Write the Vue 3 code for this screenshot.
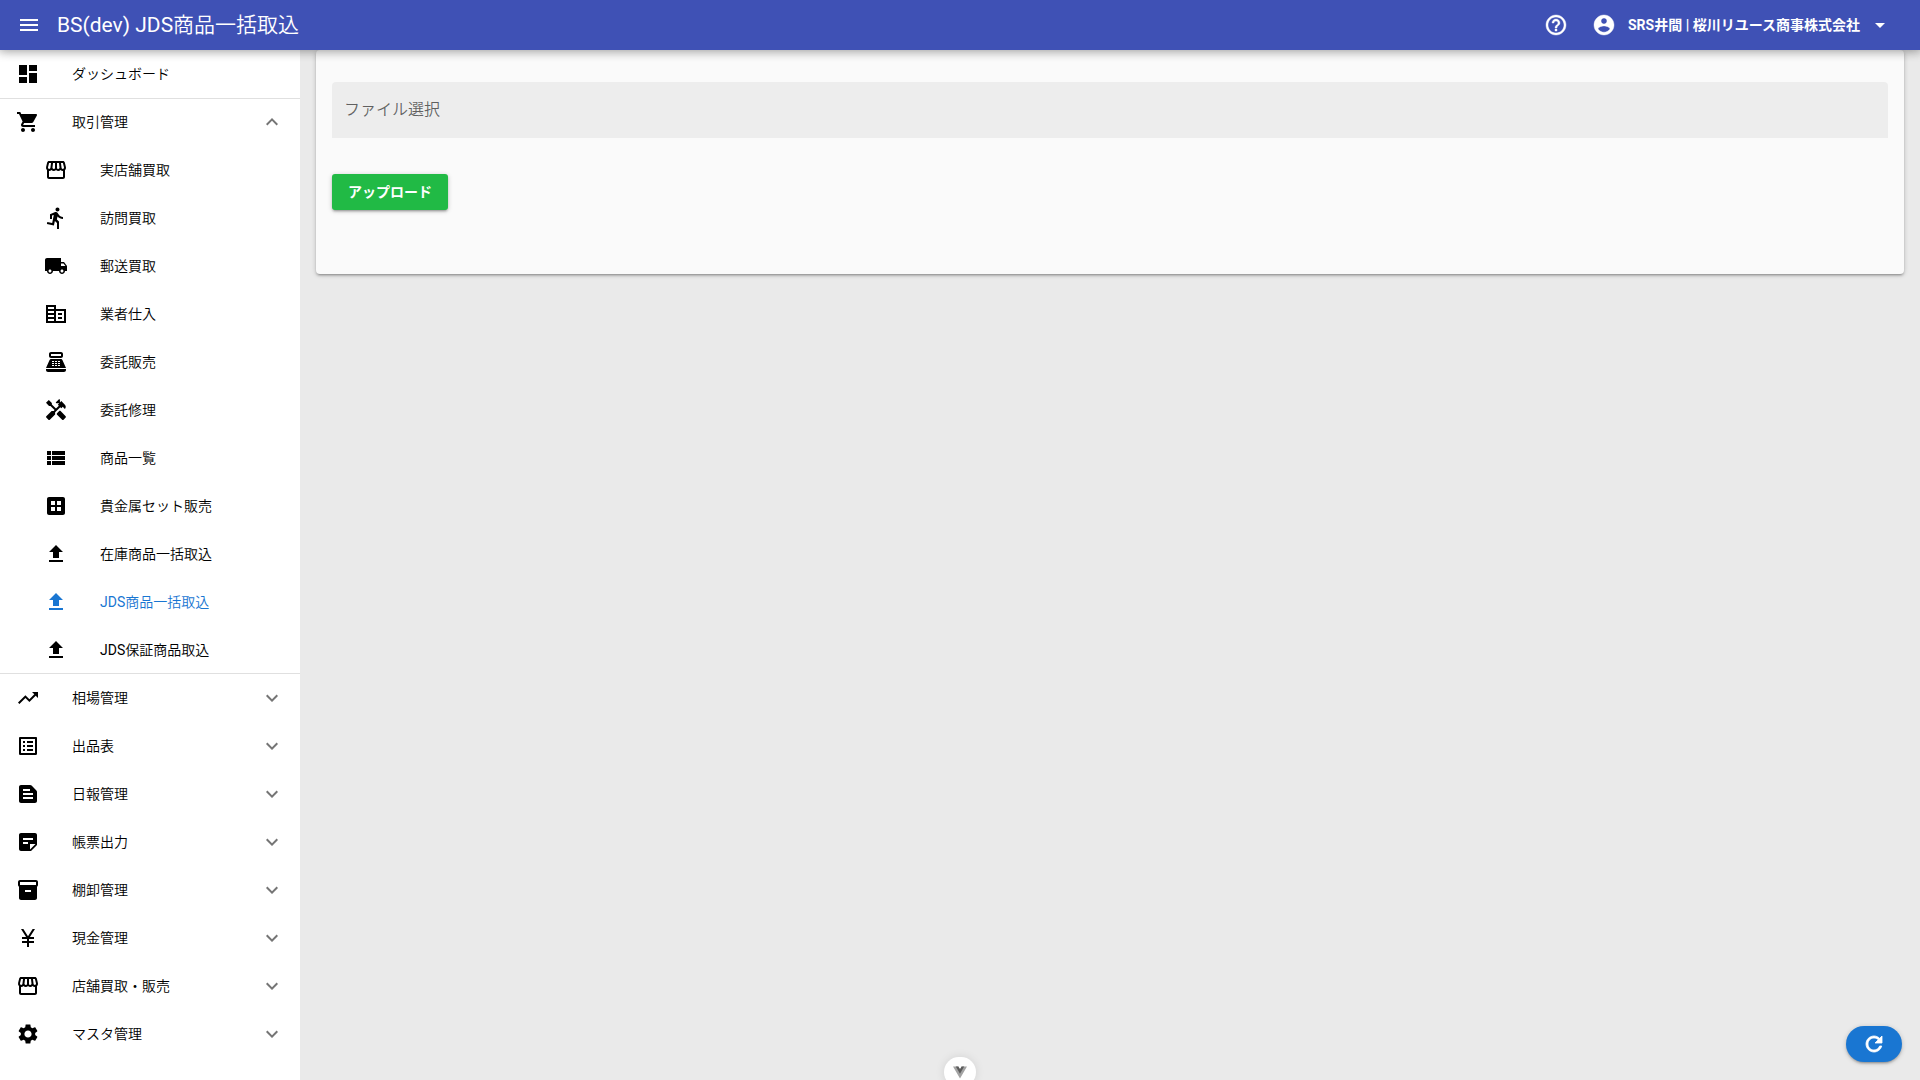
<template>
  <div class="layout">
    <header class="toolbar">
      <button type="button" class="btn-icon" aria-label="メニュー" @click="drawer = !drawer">
        <svg class="icon" viewBox="0 0 24 24"><path :d="icons.menu" /></svg>
      </button>
      <h1 class="toolbar-title">BS(dev) JDS商品一括取込</h1>
      <button type="button" class="btn-icon" aria-label="ヘルプ">
        <svg class="icon icon-medium" viewBox="0 0 24 24"><path :d="icons.help" /></svg>
      </button>
      <button type="button" class="btn-user">
        <svg class="icon icon-medium" viewBox="0 0 24 24"><path :d="icons.account" /></svg>
        <span>SRS井間 | 桜川リユース商事株式会社</span>
        <svg class="icon" viewBox="0 0 24 24"><path :d="icons.dropdown" /></svg>
      </button>
    </header>

    <div class="body">
      <nav v-if="drawer" class="drawer">
        <a href="#" class="item">
          <svg class="icon" viewBox="0 0 24 24"><path :d="icons.dashboard" /></svg>
          <span class="item-label">ダッシュボード</span>
        </a>
        <div v-for="group in groups" :key="group.label" class="group" :class="{ open: group.open }">
          <button type="button" class="item" :aria-expanded="group.open" @click="group.open = !group.open">
            <svg class="icon" viewBox="0 0 24 24"><path :d="icons[group.icon]" /></svg>
            <span class="item-label">{{ group.label }}</span>
            <svg class="icon chevron" viewBox="0 0 24 24"><path :d="group.open ? icons.up : icons.down" /></svg>
          </button>
          <template v-if="group.open">
            <a
              v-for="item in group.items"
              :key="item.label"
              href="#"
              class="item item-sub"
              :class="{ active: item.active }"
            >
              <svg class="icon" viewBox="0 0 24 24"><path fill-rule="evenodd" :d="icons[item.icon]" /></svg>
              <span class="item-label">{{ item.label }}</span>
            </a>
          </template>
        </div>
      </nav>

      <main class="page">
        <form class="card" @submit.prevent>
          <label class="file-field">
            <span>{{ fileName || 'ファイル選択' }}</span>
            <input type="file" class="file-input" @change="onFile" />
          </label>
          <button type="submit" class="btn-upload">アップロード</button>
        </form>
      </main>
    </div>

    <button type="button" class="btn-refresh" aria-label="更新">
      <svg class="icon icon-bold" viewBox="0 0 24 24"><path :d="icons.refresh" /></svg>
    </button>
    <button type="button" class="btn-devtools" aria-label="DevTools">
      <svg class="vue-logo" viewBox="0 0 256 221">
        <path class="logo-light" d="M204.8 0H256L128 220.8 0 0h97.92L128 51.2 157.44 0h47.36z" />
        <path class="logo-dark" d="M50.56 0L128 133.12 204.8 0h-47.36L128 51.2 97.92 0H50.56z" />
      </svg>
    </button>
  </div>
</template>

<script setup>
import { ref } from 'vue'

const drawer = ref(true)
const fileName = ref('')

const groups = ref([
  {
    label: '取引管理',
    icon: 'cart',
    open: true,
    items: [
      { label: '実店舗買取', icon: 'store' },
      { label: '訪問買取', icon: 'run' },
      { label: '郵送買取', icon: 'truck' },
      { label: '業者仕入', icon: 'office' },
      { label: '委託販売', icon: 'register' },
      { label: '委託修理', icon: 'tools' },
      { label: '商品一覧', icon: 'list' },
      { label: '貴金属セット販売', icon: 'grid' },
      { label: '在庫商品一括取込', icon: 'upload' },
      { label: 'JDS商品一括取込', icon: 'upload', active: true },
      { label: 'JDS保証商品取込', icon: 'upload' }
    ]
  },
  { label: '相場管理', icon: 'trend', open: false },
  { label: '出品表', icon: 'listAlt', open: false },
  { label: '日報管理', icon: 'snippet', open: false },
  { label: '帳票出力', icon: 'note', open: false },
  { label: '棚卸管理', icon: 'inventory', open: false },
  { label: '現金管理', icon: 'yen', open: false },
  { label: '店舗買取・販売', icon: 'store', open: false },
  { label: 'マスタ管理', icon: 'settings', open: false }
])

const icons = {
  menu: 'M3 18h18v-2H3v2zm0-5h18v-2H3v2zm0-7v2h18V6H3z',
  help: 'M11 18h2v-2h-2v2zm1-16C6.48 2 2 6.48 2 12s4.48 10 10 10 10-4.48 10-10S17.52 2 12 2zm0 18c-4.41 0-8-3.59-8-8s3.59-8 8-8 8 3.59 8 8-3.59 8-8 8zm0-14c-2.21 0-4 1.79-4 4h2c0-1.1.9-2 2-2s2 .9 2 2c0 2-3 1.75-3 5h2c0-2.25 3-2.5 3-5 0-2.21-1.79-4-4-4z',
  account: 'M12 2C6.48 2 2 6.48 2 12s4.48 10 10 10 10-4.48 10-10S17.52 2 12 2zm0 3c1.66 0 3 1.34 3 3s-1.34 3-3 3-3-1.34-3-3 1.34-3 3-3zm0 14.2c-2.5 0-4.71-1.28-6-3.22.03-1.99 4-3.08 6-3.08 1.99 0 5.97 1.09 6 3.08-1.29 1.94-3.5 3.22-6 3.22z',
  dropdown: 'M7 10l5 5 5-5z',
  up: 'M7.41 15.41L12 10.83l4.59 4.58L18 14l-6-6-6 6z',
  down: 'M7.41 8.59L12 13.17l4.59-4.58L18 10l-6 6-6-6 1.41-1.41z',
  refresh: 'M17.65 6.35C16.2 4.9 14.21 4 12 4c-4.42 0-7.99 3.58-7.99 8s3.57 8 7.99 8c3.73 0 6.84-2.55 7.73-6h-2.08c-.82 2.33-3.04 4-5.65 4-3.31 0-6-2.69-6-6s2.69-6 6-6c1.66 0 3.14.69 4.22 1.78L13 11h7V4l-2.35 2.35z',
  dashboard: 'M3 13h8V3H3v10zm0 8h8v-6H3v6zm10 0h8V11h-8v10zm0-18v6h8V3h-8z',
  cart: 'M7 18c-1.1 0-1.99.9-1.99 2S5.9 22 7 22s2-.9 2-2-.9-2-2-2zM1 2v2h2l3.6 7.59-1.35 2.45c-.16.28-.25.61-.25.96 0 1.1.9 2 2 2h12v-2H7.42c-.14 0-.25-.11-.25-.25l.03-.12.9-1.63h7.45c.75 0 1.41-.41 1.75-1.03l3.58-6.49c.08-.14.12-.31.12-.48 0-.55-.45-1-1-1H5.21l-.94-2H1zm16 16c-1.1 0-1.99.9-1.99 2s.89 2 1.99 2 2-.9 2-2-.9-2-2-2z',
  store: 'M21.9 8.89l-1.05-4.37c-.22-.9-1-1.52-1.91-1.52H5.05c-.9 0-1.69.63-1.9 1.52L2.1 8.89c-.24 1.02-.02 2.06.62 2.88.08.11.19.19.28.29V19c0 1.1.9 2 2 2h14c1.1 0 2-.9 2-2v-6.94c.09-.09.2-.18.28-.28.64-.82.87-1.87.62-2.89zm-2.99-3.9l1.05 4.37c.1.42.01.84-.25 1.17-.14.18-.44.47-.94.47-.61 0-1.14-.49-1.21-1.14L16.98 5l1.93-.01zM13 5h1.96l.54 4.52c.05.39-.07.78-.33 1.07-.22.26-.54.41-.95.41-.67 0-1.22-.59-1.22-1.31V5zM8.49 9.52L9.04 5H11v4.69c0 .72-.55 1.31-1.29 1.31-.34 0-.65-.15-.89-.41-.25-.29-.37-.68-.33-1.07zm-4.45-.16L5.05 5h1.97l-.58 4.86c-.08.65-.6 1.14-1.21 1.14-.49 0-.8-.29-.93-.47-.27-.32-.36-.75-.26-1.17zM5 19v-6.03c.08.01.15.03.23.03.87 0 1.66-.36 2.24-.95.6.6 1.4.95 2.31.95.87 0 1.65-.36 2.23-.93.59.57 1.39.93 2.29.93.84 0 1.64-.35 2.24-.95.58.59 1.37.95 2.24.95.08 0 .15-.02.23-.03V19H5z',
  run: 'M13.49 5.48c1.1 0 2-.9 2-2s-.9-2-2-2-2 .9-2 2 .9 2 2 2zm-3.6 13.9l1-4.4 2.1 2v6h2v-7.5l-2.1-2 .6-3c1.3 1.5 3.3 2.5 5.5 2.5v-2c-1.9 0-3.5-1-4.3-2.4l-1-1.6c-.4-.6-1-1-1.7-1-.3 0-.5.1-.8.1l-5.2 2.2v4.7h2v-3.4l1.8-.7-1.6 8.1-4.9-1-.4 2 7 1.4z',
  truck: 'M20 8h-3V4H3c-1.1 0-2 .9-2 2v11h2c0 1.66 1.34 3 3 3s3-1.34 3-3h6c0 1.66 1.34 3 3 3s3-1.34 3-3h2v-5l-3-4zM6 18.5c-.83 0-1.5-.67-1.5-1.5s.67-1.5 1.5-1.5 1.5.67 1.5 1.5-.67 1.5-1.5 1.5zm13.5-9l1.96 2.5H17V9.5h2.5zm-1.5 9c-.83 0-1.5-.67-1.5-1.5s.67-1.5 1.5-1.5 1.5.67 1.5 1.5-.67 1.5-1.5 1.5z',
  office: 'M12 7V3H2v18h20V7H12zM10 19H4v-2h6v2zm0-4H4v-2h6v2zm0-4H4V9h6v2zm0-4H4V5h6v2zm10 12h-8V9h8v10zm-2-8h-4v2h4v-2zm0 4h-4v2h4v-2z',
  register: 'M17 2H7c-1.1 0-2 .9-2 2v2c0 1.1.9 2 2 2h10c1.1 0 2-.9 2-2V4c0-1.1-.9-2-2-2zm0 4H7V4h10v2zm3 16H4c-1.1 0-2-.9-2-2v-1h20v1c0 1.1-.9 2-2 2zm-1.47-11.81C18.21 9.47 17.49 9 16.7 9H7.3c-.79 0-1.51.47-1.83 1.19L2 18h20l-3.47-7.81zM8 11h2v1H8zM11 11h2v1h-2zM14 11h2v1h-2zM8 13h2v1H8zM11 13h2v1h-2zM14 13h2v1h-2zM8 15h2v1H8zM11 15h2v1h-2zM14 15h2v1h-2z',
  tools: 'M21.67 18.17l-5.3-5.3h-.99l-2.54 2.54v.99l5.3 5.3c.39.39 1.02.39 1.41 0l2.12-2.12c.39-.38.39-1.02 0-1.41zM17.34 10.19l1.41-1.41 2.12 2.12c1.17-1.17 1.17-3.07 0-4.24l-3.54-3.54-1.41 1.41V1.71L15.22 1l-3.54 3.54.71.71h2.83l-1.41 1.41 1.06 1.06-2.89 2.89-4.13-4.13V5.06L4.83 2.04 2 4.87 5.03 7.9h1.41l4.13 4.13-.85.85H7.6l-5.3 5.3c-.39.39-.39 1.02 0 1.41l2.12 2.12c.39.39 1.02.39 1.41 0l5.3-5.3v-2.12l5.15-5.15 1.06 1.05z',
  list: 'M3 14h4v-4H3v4zm0 5h4v-4H3v4zM3 9h4V5H3v4zm5 5h13v-4H8v4zm0 5h13v-4H8v4zM8 5v4h13V5H8z',
  grid: 'M19 3H5c-1.1 0-2 .9-2 2v14c0 1.1.9 2 2 2h14c1.1 0 2-.9 2-2V5c0-1.1-.9-2-2-2zM7 7h4v4H7zM13 7h4v4h-4zM7 13h4v4H7zM13 13h4v4h-4z',
  upload: 'M5 20h14v-2H5v2zm4-4h6v-6h4l-7-7-7 7h4v6z',
  trend: 'M16 6l2.29 2.29-4.88 4.88-4-4L2 16.59 3.41 18l6-6 4 4 6.3-6.29L22 12V6z',
  listAlt: 'M19 5v14H5V5h14m1.1-2H3.9c-.5 0-.9.4-.9.9v16.2c0 .4.4.9.9.9h16.2c.4 0 .9-.5.9-.9V3.9c0-.5-.5-.9-.9-.9zM11 7h6v2h-6V7zm0 4h6v2h-6v-2zm0 4h6v2h-6zM7 7h2v2H7zm0 4h2v2H7zm0 4h2v2H7z',
  snippet: 'M20.41 8.41l-4.83-4.83C15.21 3.21 14.7 3 14.17 3H5c-1.1 0-2 .9-2 2v14c0 1.1.9 2 2 2h14c1.1 0 2-.9 2-2V9.83c0-.53-.21-1.04-.59-1.42zM7 7h7v2H7V7zm10 10H7v-2h10v2zm0-4H7v-2h10v2z',
  note: 'M19 3H4.99C3.89 3 3 3.9 3 5l.01 14c0 1.1.89 2 1.99 2h10l6-6V5c0-1.1-.9-2-2-2zM7 8h10v2H7V8zm5 6H7v-2h5v2zm2 5.5V14h5.5L14 19.5z',
  inventory: 'M20 2H4c-1 0-2 .9-2 2v3.01c0 .72.43 1.34 1 1.69V20c0 1.1 1.1 2 2 2h14c.9 0 2-.9 2-2V8.7c.57-.35 1-.97 1-1.69V4c0-1.1-1-2-2-2zm-5 12H9v-2h6v2zm5-7H4V4h16v3z',
  yen: 'M13.92 11H18v2h-5v2h5v2h-5v4h-2v-4H6v-2h5v-2H6v-2h4.08L5 3h2.37L12 10.29 16.63 3H19l-5.08 8z',
  settings: 'M19.14 12.94c.04-.3.06-.61.06-.94 0-.32-.02-.64-.07-.94l2.03-1.58c.18-.14.23-.41.12-.61l-1.92-3.32c-.12-.22-.37-.29-.59-.22l-2.39.96c-.5-.38-1.03-.7-1.62-.94l-.36-2.54c-.04-.24-.24-.41-.48-.41h-3.84c-.24 0-.43.17-.47.41l-.36 2.54c-.59.24-1.13.57-1.62.94l-2.39-.96c-.22-.08-.47 0-.59.22L2.74 8.87c-.12.21-.08.47.12.61l2.03 1.58c-.05.3-.09.63-.09.94s.02.64.07.94l-2.03 1.58c-.18.14-.23.41-.12.61l1.92 3.32c.12.22.37.29.59.22l2.39-.96c.5.38 1.03.7 1.62.94l.36 2.54c.05.24.24.41.48.41h3.84c.24 0 .44-.17.47-.41l.36-2.54c.59-.24 1.13-.56 1.62-.94l2.39.96c.22.08.47 0 .59-.22l1.92-3.32c.12-.22.07-.47-.12-.61l-2.01-1.58zM12 15.6c-1.98 0-3.6-1.62-3.6-3.6s1.62-3.6 3.6-3.6 3.6 1.62 3.6 3.6-1.62 3.6-3.6 3.6z'
}

function onFile(e) { fileName.value = e.target.files[0]?.name || '' }
</script>

<style>
body { margin: 0; background: #eaeaea; }
</style>

<style scoped>
.layout {
  --primary: #1976d2;
  --positive: #21ba45;
  --toolbar: #3f51b5;

  display: flex; flex-direction: column;
  height: 100vh; overflow: hidden;
  font-family: Roboto, "Noto Sans CJK JP DemiLight", "Noto Sans CJK JP", sans-serif;
  font-size: 14px; line-height: 20px; color: #000;
}

button { font: inherit; color: inherit; background: none; border: none; padding: 0; cursor: pointer; }
.icon { width: 24px; height: 24px; flex: none; fill: currentColor; }
.icon-medium { stroke: currentColor; stroke-width: 0.4; }
.icon-bold { stroke: currentColor; stroke-width: 0.8; }

.toolbar {
  display: flex; align-items: center; flex: none;
  height: 50px; padding: 0 28px 0 17px;
  background: var(--toolbar); color: #fff;
  box-shadow: 0 0 10px 2px rgba(0,0,0,0.2), 0 0 10px rgba(0,0,0,0.24);
  z-index: 2;
}
.toolbar-title { flex: 1; margin: 0; padding: 0 16px; font-size: 21px; font-weight: 400; line-height: 32px; }
.btn-icon { display: flex; }
.btn-user { display: flex; align-items: center; margin-left: 24px; }
.btn-user span { margin: 0 8px 0 12px; }
.btn-user, .btn-upload { font-family: Roboto, "Noto Sans CJK JP", sans-serif; font-weight: 700; }

.body { display: flex; flex: 1; min-height: 0; }

.drawer { width: 300px; flex: none; background: #fff; overflow: hidden auto; }
.item {
  display: flex; align-items: center;
  width: 100%; height: 48px; padding: 0 16px; box-sizing: border-box;
  color: #000; text-align: left; text-decoration: none;
}
.item-sub { padding-left: 44px; }
.item-label { flex: 1; padding-left: 32px; }
.item.active { color: var(--primary); }
.chevron { color: #757575; }
.group.open > .item:first-child { box-shadow: inset 0 1px rgba(0,0,0,0.12); }
.group.open > .item:last-child { box-shadow: inset 0 -1px rgba(0,0,0,0.12); }

.page { flex: 1; min-width: 0; padding: 0 16px; }
.card {
  padding: 32px 16px 64px;
  background: #fafafa; border-radius: 4px;
  box-shadow: 0 1px 5px rgba(0,0,0,0.2), 0 2px 2px rgba(0,0,0,0.14), 0 3px 1px -2px rgba(0,0,0,0.12);
}
.file-field {
  display: flex; align-items: center; position: relative;
  height: 56px; padding: 0 12px; margin-bottom: 36px;
  background: rgba(0,0,0,0.05); border-radius: 4px 4px 0 0;
  color: rgba(0,0,0,0.6); font-size: 16px; line-height: 20px;
}
.file-input { position: absolute; inset: 0; width: 100%; opacity: 0; cursor: pointer; }
.btn-upload {
  display: block; height: 36px; padding: 0 16px;
  background: var(--positive); color: #fff; border-radius: 3px;
  box-shadow: 0 1px 5px rgba(0,0,0,0.2), 0 2px 2px rgba(0,0,0,0.14), 0 3px 1px -2px rgba(0,0,0,0.12);
}

.btn-refresh {
  position: fixed; right: 18px; bottom: 18px; z-index: 3;
  display: flex; align-items: center; justify-content: center;
  width: 56px; height: 36px; border-radius: 28px;
  background: var(--primary); color: #fff;
  box-shadow: 0 1px 5px rgba(0,0,0,0.2), 0 2px 2px rgba(0,0,0,0.14), 0 3px 1px -2px rgba(0,0,0,0.12);
}
.btn-devtools {
  position: fixed; left: 50%; bottom: -7px; z-index: 3;
  display: flex; align-items: center; justify-content: center;
  width: 32px; height: 30px; margin-left: -16px; border-radius: 16px;
  background: #fff; box-shadow: 0 0 10px rgba(0,0,0,0.1);
}
.vue-logo { width: 14px; height: 13px; }
.logo-light { fill: #a3a3a3; }
.logo-dark { fill: #5c5c5c; }
</style>
